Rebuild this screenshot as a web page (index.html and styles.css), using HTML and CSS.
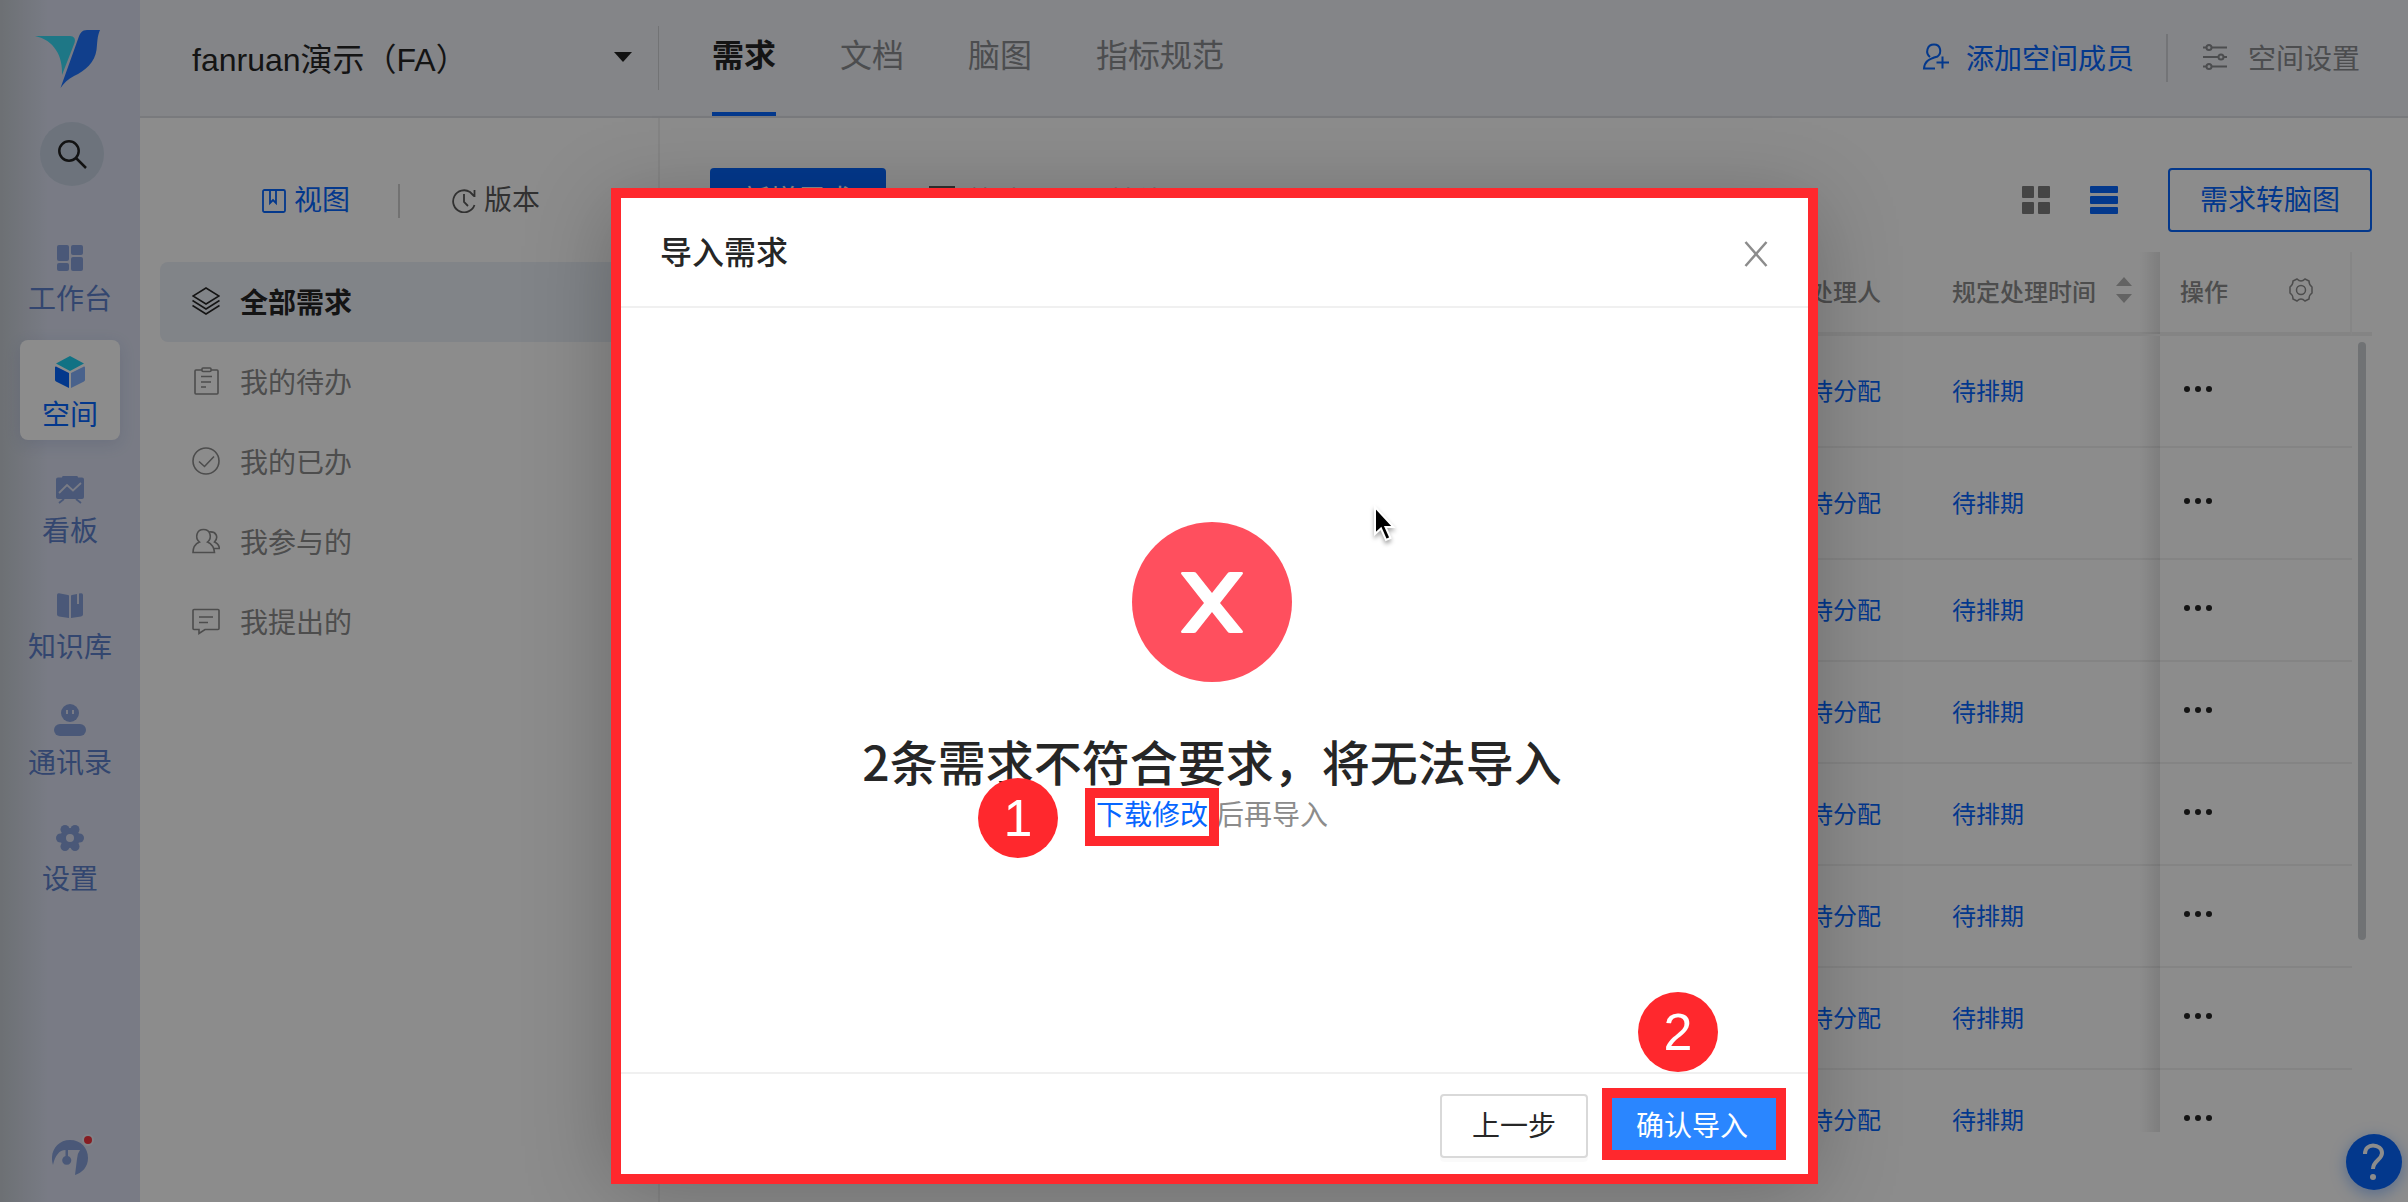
FILE: index.html
```html
<!DOCTYPE html>
<html lang="zh-CN">

<head>
    <meta charset="UTF-8">
    <meta name="viewport" content="width=device-width, initial-scale=1.0">
    <title>导入需求</title>
    <link rel="stylesheet" href="styles.css">
</head>

<body>
    <div class="app">
        <!-- 左侧导航 -->
        <nav class="sidebar">
            <a class="logo" href="#" aria-label="首页">
                <svg width="66" height="60" viewBox="0 0 66 60">
                    <path fill="#38d9f5" d="M0 6H35C39 6 41 9 39.500 13L27 45C28 26 19 10 0 6Z"/>
                    <path fill="#1f74ff" d="M52 0H65C62 7 62.500 12 61.500 20C60 32 50 41 39 46C33 49 29 53 25.500 58L43 9C45 3 47 0 52 0Z"/>
                </svg>
            </a>
            <button class="search" type="button" aria-label="搜索">
                <svg width="32" height="32" viewBox="0 0 32 32" fill="none" stroke="#222" stroke-width="2.500">
                    <circle cx="13" cy="13" r="9.700"/>
                    <path d="M20 20L30 30"/>
                </svg>
            </button>
            <a class="nav-item" href="#">
                <svg width="28" height="28" viewBox="0 0 28 28" fill="currentColor">
                    <rect x="1" y="1" width="12" height="16" rx="2"/>
                    <rect x="15" y="1" width="12" height="10" rx="2"/>
                    <rect x="1" y="19" width="12" height="8" rx="2"/>
                    <rect x="15" y="13" width="12" height="14" rx="2"/>
                </svg>
                <span>工作台</span>
            </a>
            <a class="nav-item active" href="#">
                <svg width="30" height="32" viewBox="0 0 30 32">
                    <path fill="#1fd0f0" d="M15 0L29 7.500L15 15L1 7.500Z"/>
                    <path fill="#0666ff" d="M0 11.500C0 10.500 .800 10.300 1.500 10.700L14 17V32L1 25.500C.300 25.100 0 24.500 0 24Z"/>
                    <path fill="#85b2ff" d="M30 11.500C30 10.500 29.200 10.300 28.500 10.700L16 17V32L29 25.500C29.700 25.100 30 24.500 30 24Z"/>
                </svg>
                <span>空间</span>
            </a>
            <a class="nav-item" href="#">
                <svg width="28" height="28" viewBox="0 0 28 28">
                    <path fill="currentColor" d="M6 1.500Q6 0 7 0H21Q22 0 22 1.500H26Q28 1.500 28 3.500V21Q28 23 26 23H2Q0 23 0 21V3.500Q0 1.500 2 1.500Z"/>
                    <path fill="none" stroke="currentColor" stroke-width="1.800" d="M8 23L3 27M20 23L25 27"/>
                    <path fill="none" stroke="#dce1f2" stroke-width="1.800" d="M3 17L11 9L17 14.500L25 7"/>
                </svg>
                <span>看板</span>
            </a>
            <a class="nav-item" href="#">
                <svg width="28" height="28" viewBox="0 0 28 28" fill="currentColor">
                    <path d="M1 3Q1 1 3 1.200L12 3Q13 3.200 13 4V26L3 24.500Q1 24 1 22.500Z"/>
                    <path d="M15 4Q15 3.200 16 3L21 2V12H23V1.600L25 1.200Q27 1 27 3V22.500Q27 24 25 24.500L15 26Z"/>
                </svg>
                <span>知识库</span>
            </a>
            <a class="nav-item" href="#">
                <svg width="32" height="32" viewBox="0 0 32 32">
                    <circle fill="currentColor" cx="16" cy="9" r="9"/>
                    <rect fill="currentColor" y="20" width="32" height="12" rx="6"/>
                    <path stroke="#dce1f2" stroke-width="2" d="M13 6V10M19 6V10"/>
                </svg>
                <span>通讯录</span>
            </a>
            <a class="nav-item" href="#">
                <svg width="28" height="28" viewBox="0 0 28 28">
                    <g fill="currentColor">
                        <circle cx="14" cy="14" r="10"/>
                        <circle cx="4.500" cy="14" r="4.500"/>
                        <circle cx="23.500" cy="14" r="4.500"/>
                        <circle cx="9" cy="5.500" r="4.500"/>
                        <circle cx="19" cy="5.500" r="4.500"/>
                        <circle cx="9" cy="22.500" r="4.500"/>
                        <circle cx="19" cy="22.500" r="4.500"/>
                    </g>
                    <circle fill="#dce1f2" cx="14" cy="14" r="4"/>
                </svg>
                <span>设置</span>
            </a>
            <a class="avatar" href="#" aria-label="个人中心">
                <svg width="42" height="42" viewBox="0 0 42 42">
                    <path fill="#87a0da" d="M1 31C-3 18 5 6 18 6C29 6 36 14 36 24C36 33 30 39 23 41L25 25Q25 20 28 16H16V22A4.500 4.500 0 1 1 13.500 22V16C7 16 3 22 1 31Z"/>
                    <circle fill="#fff" fill-opacity=".4" cx="36" cy="6" r="6"/>
                    <circle fill="#f5333f" cx="36" cy="6" r="4"/>
                </svg>
            </a>
        </nav>

        <div class="page">
            <!-- 顶部栏 -->
            <header class="header">
                <button class="project" type="button">
                    <span>fanruan演示（FA）</span>
                    <svg width="18" height="10" viewBox="0 0 18 10"><path fill="#222" d="M0 0H18L9 10Z"/></svg>
                </button>
                <nav class="tabs">
                    <a class="tab active" href="#">需求</a>
                    <a class="tab" href="#">文档</a>
                    <a class="tab" href="#">脑图</a>
                    <a class="tab" href="#">指标规范</a>
                </nav>
                <div class="header-actions">
                    <a class="action primary" href="#">
                        <svg width="28" height="28" viewBox="0 0 28 28" fill="none" stroke="currentColor" stroke-width="2">
                            <path d="M8 14C3 10 5 1.500 12 1.500C19 1.500 20 10 15.500 13.500C6 16 2.500 19 2 25.500H13M20.500 13.500V25.500M14.500 19.500H27"/>
                        </svg>
                        添加空间成员
                    </a>
                    <a class="action" href="#">
                        <svg width="26" height="28" viewBox="0 0 26 28" fill="none" stroke="currentColor" stroke-width="2">
                            <path d="M1 4.500H4M10 4.500H25M1 14H16M22 14H25M1 23.500H4M10 23.500H25"/>
                            <circle cx="7" cy="4.500" r="2.500"/>
                            <circle cx="19" cy="14" r="2.500"/>
                            <circle cx="7" cy="23.500" r="2.500"/>
                        </svg>
                        空间设置
                    </a>
                </div>
            </header>

            <div class="content">
                <!-- 视图列表 -->
                <aside class="views">
                    <div class="view-switch">
                        <a class="switch-item active" href="#">
                            <svg width="24" height="24" viewBox="0 0 24 24" fill="none" stroke="currentColor" stroke-width="1.800">
                                <rect x="1" y="1" width="22" height="22" rx="1.500"/>
                                <path d="M8 1V14L11 11L14 14V1"/>
                            </svg>
                            视图
                        </a>
                        <a class="switch-item" href="#">
                            <svg width="24" height="24" viewBox="0 0 24 24" fill="none" stroke="currentColor" stroke-width="1.800">
                                <path d="M22.500 16A11 11 0 1 1 18 3L22 7M22.500 1V8M12 5V13L16 17"/>
                            </svg>
                            版本
                        </a>
                    </div>
                    <ul class="menu">
                        <li><a class="menu-item active" href="#">
                            <svg width="28" height="28" viewBox="0 0 28 28" fill="none" stroke="currentColor" stroke-width="1.500">
                                <path d="M14 1L27 9L14 17L1 9ZM.500 13.500L14 22L27.500 13.500M.500 18.500L14 27L27.500 18.500"/>
                            </svg>
                            全部需求</a></li>
                        <li><a class="menu-item" href="#">
                            <svg width="28" height="28" viewBox="0 0 28 28" fill="none" stroke="currentColor" stroke-width="1.600">
                                <rect x="3" y="3" width="23" height="24" rx="1"/>
                                <rect x="10" y="1" width="9" height="3.500" rx="1" fill="#fff"/>
                                <path d="M9 9.500H20M9 15H19M9 20H14"/>
                            </svg>
                            我的待办</a></li>
                        <li><a class="menu-item" href="#">
                            <svg width="28" height="28" viewBox="0 0 28 28" fill="none" stroke="currentColor" stroke-width="1.600">
                                <circle cx="14" cy="14" r="13"/>
                                <path d="M7 14.500L12.500 19.500L22 9.500"/>
                            </svg>
                            我的已办</a></li>
                        <li><a class="menu-item" href="#">
                            <svg width="28" height="28" viewBox="0 0 28 28" fill="none" stroke="currentColor" stroke-width="1.600">
                                <path d="M7.500 15C2.500 11 4.500 2.500 11.500 2.500C18.500 2.500 20.500 11 15.500 15C20 17 22 20 22.500 25.500H1C1 20 3 17 7.500 15Z"/>
                                <path d="M17 5C24 4 27 10 22.500 15C25 16 27 18 27.500 21.500H22"/>
                            </svg>
                            我参与的</a></li>
                        <li><a class="menu-item" href="#">
                            <svg width="28" height="28" viewBox="0 0 28 28" fill="none" stroke="currentColor" stroke-width="1.600">
                                <path d="M2 2.500H26Q27 2.500 27 3.500V21.500Q27 22.500 26 22.500H13L7 26.500V22.500H2Q1 22.500 1 21.500V3.500Q1 2.500 2 2.500ZM7 10H21M7 15.500H16"/>
                            </svg>
                            我提出的</a></li>
                    </ul>
                </aside>

                <!-- 需求列表 -->
                <main class="main">
                    <div class="toolbar">
                        <button class="btn btn-solid" type="button">新增需求</button>
                        <button class="tool" type="button">
                            <svg width="28" height="28" viewBox="0 0 28 28" fill="none" stroke="currentColor" stroke-width="2">
                                <path d="M2 1H26V5L17 14V26L11 23V14L2 5Z"/>
                            </svg>
                            筛选
                        </button>
                        <button class="tool" type="button">其他</button>
                        <div class="toolbar-right">
                            <button class="icon-btn" type="button" aria-label="卡片视图">
                                <svg width="28" height="28" viewBox="0 0 28 28" fill="currentColor">
                                    <rect width="12" height="12" rx="1"/>
                                    <rect x="16" width="12" height="12" rx="1"/>
                                    <rect y="16" width="12" height="12" rx="1"/>
                                    <rect x="16" y="16" width="12" height="12" rx="1"/>
                                </svg>
                            </button>
                            <button class="icon-btn active" type="button" aria-label="列表视图">
                                <svg width="28" height="28" viewBox="0 0 28 28" fill="currentColor">
                                    <rect width="28" height="7" rx="1"/>
                                    <rect y="10" width="28" height="8" rx="1"/>
                                    <rect y="21" width="28" height="7" rx="1"/>
                                </svg>
                            </button>
                            <button class="btn btn-line" type="button">需求转脑图</button>
                        </div>
                    </div>

                    <div class="table-wrap">
                        <table class="table">
                            <thead>
                                <tr>
                                    <th></th>
                                    <th class="col-user">处理人</th>
                                    <th class="col-time">
                                        <div class="th-inner">规定处理时间
                                            <svg width="16" height="26" viewBox="0 0 16 26" fill="#b5b5b5"><path d="M8 0L16 9H0ZM8 26L16 17H0Z"/></svg>
                                        </div>
                                    </th>
                                    <th class="col-fixed">
                                        <div class="th-inner">操作
                                            <svg width="26" height="26" viewBox="0 0 26 26" fill="none" stroke="currentColor" stroke-width="1.500">
                                                <path d="M9 2Q11 4 13 4Q15 4 17 2L21 4Q21 8 24 10V16Q21 18 21 22L17 24Q15 22 13 22Q11 22 9 24L5 22Q5 18 2 16V10Q5 8 5 4Z"/>
                                                <circle cx="13" cy="13" r="4.500"/>
                                            </svg>
                                        </div>
                                    </th>
                                </tr>
                            </thead>
                            <tbody id="rows"></tbody>
                        </table>
                        <div class="gutter">
                            <div class="gutter-head"></div>
                            <div class="thumb"></div>
                        </div>
                    </div>
                </main>
            </div>
        </div>
    </div>

    <button class="help" type="button" aria-label="帮助">
        <svg width="24" height="38" viewBox="0 0 24 38">
            <path fill="none" stroke="#fff" stroke-width="4" d="M3 11C3 5 7 2.500 11 2.500C16 2.500 20 5.500 20 10C20 17 11 17 11 26"/>
            <circle fill="#fff" cx="11" cy="34" r="3"/>
        </svg>
    </button>

    <!-- 导入弹窗 -->
    <div class="mask">
        <div class="modal" role="dialog" aria-labelledby="modal-title">
            <div class="modal-head">
                <h2 class="modal-title" id="modal-title">导入需求</h2>
                <button class="close" type="button" aria-label="关闭">
                    <svg width="24" height="26" viewBox="0 0 24 26"><path fill="none" stroke="#8c8c8c" stroke-width="2.500" d="M1.500 1L22.500 25M22.500 1L1.500 25"/></svg>
                </button>
            </div>
            <div class="modal-body">
                <svg width="160" height="160" viewBox="0 0 160 160">
                    <circle fill="#ff4f5e" cx="80" cy="80" r="80"/>
                    <path fill="#fff" d="M50 50H62Q64 50 65 52L80 71L95 52Q96 50 98 50H110Q112 51 110 53L88 81L110 108Q112 110 110 111H98Q96 111 95 109L80 90L65 109Q64 111 62 111H50Q48 110 50 108L72 81L50 53Q48 51 50 50Z"/>
                </svg>
                <h3 class="result-title">2条需求不符合要求，将无法导入</h3>
                <p class="result-text">
                    <span class="step step-1">1</span>
                    <a class="download" href="#">下载修改</a>
                    <span>后再导入</span>
                </p>
            </div>
            <div class="modal-foot">
                <button class="btn btn-default" type="button">上一步</button>
                <div class="confirm">
                    <button class="btn btn-confirm" type="button">确认导入</button>
                    <span class="step step-2">2</span>
                </div>
            </div>
        </div>
    </div>

    <!-- 鼠标指针 -->
    <svg class="cursor" width="24" height="38" viewBox="0 0 24 38">
        <path fill="#000" stroke="#fff" stroke-width="2" d="M2 2V29L8 23.500L13 35L17.500 33L12.500 22H20.500Z"/>
    </svg>

    <script>
        const rows = document.getElementById('rows');

        for (let i = 0; i < 8; i++) {
            const tr = document.createElement('tr');
            if (i < 2) {
                tr.className = 'tall';
            }
            tr.innerHTML = `
                <td></td>
                <td><a href="#">待分配</a></td>
                <td><a href="#">待排期</a></td>
                <td class="col-fixed">
                    <button class="more" type="button" aria-label="更多操作"><i></i><i></i><i></i></button>
                </td>`;
            rows.appendChild(tr);
        }
    </script>
</body>

</html>
```

FILE: styles.css
```css
* {
    box-sizing: border-box;
}

body {
    margin: 0;
    height: 100vh;
    overflow: hidden;
    position: relative;
    font-family: "Liberation Sans", "Noto Sans CJK SC", sans-serif;
    font-size: 28px;
    color: #262626;
    background: #fff;
}

a {
    color: inherit;
    text-decoration: none;
}

button {
    padding: 0;
    border: none;
    background: none;
    font: inherit;
    color: inherit;
    cursor: pointer;
}

svg {
    display: block;
    flex: none;
}

.app {
    display: flex;
    height: 100%;
}

/* 左侧导航 */
.sidebar {
    flex: none;
    width: 140px;
    padding: 30px 20px 28px;
    display: flex;
    flex-direction: column;
    align-items: center;
    gap: 16px;
    background: linear-gradient(to right, #c6ccd3, #dce1f2 48px);
}

.logo {
    margin: 0 4px 16px 0;
}

.search {
    flex: none;
    width: 64px;
    height: 64px;
    margin-left: 4px;
    margin-bottom: 22px;
    display: flex;
    align-items: center;
    justify-content: center;
    border-radius: 50%;
    background: #c6d2e2;
}

.nav-item {
    flex: none;
    width: 100px;
    height: 100px;
    padding-bottom: 4px;
    display: flex;
    flex-direction: column;
    align-items: center;
    justify-content: flex-end;
    gap: 8px;
    border-radius: 8px;
    color: #87a0da;
}

.nav-item span {
    line-height: 40px;
    color: #5d80ca;
}

.nav-item.active {
    background: #fff;
    box-shadow: 0 4px 16px rgba(60, 90, 160, 0.15);
}

.nav-item.active span {
    color: #0666ff;
}

.avatar {
    margin-top: auto;
    margin-left: 6px;
    flex: none;
    height: 40px;
}

.page {
    flex: 1;
    min-width: 0;
    display: flex;
    flex-direction: column;
}

/* 顶部栏 */
.header {
    flex: none;
    height: 118px;
    display: flex;
    background: #f0f2f7;
    border-bottom: 2px solid #dddfe4;
}

.project {
    width: 519px;
    height: 64px;
    margin-top: 26px;
    padding: 0 26px 2px 52px;
    display: flex;
    align-items: center;
    justify-content: space-between;
    border-right: 1px solid #cfd1d6;
    font-size: 32px;
}

.tabs {
    display: flex;
    gap: 64px;
    margin-left: 53px;
    font-size: 32px;
    line-height: 112px;
}

.tab {
    color: #8a8c90;
}

.tab.active {
    color: #262626;
    font-weight: 700;
    border-bottom: 4px solid #0666ff;
}

.header-actions {
    margin-left: auto;
    padding: 34px 48px 34px 0;
    display: flex;
}

.action {
    display: flex;
    align-items: center;
    gap: 20px;
    padding-bottom: 2px;
    color: #8a8c90;
}

.action.primary {
    padding-right: 32px;
    margin-right: 34px;
    gap: 16px;
    color: #0666ff;
    border-right: 2px solid #d2d4d9;
}

.content {
    flex: 1;
    min-height: 0;
    display: flex;
}

/* 视图列表 */
.views {
    flex: none;
    width: 520px;
    padding: 66px 20px 0;
    border-right: 2px solid #f0f0f0;
}

.view-switch {
    display: flex;
    justify-content: center;
    line-height: 34px;
    margin-bottom: 44px;
}

.switch-item {
    display: flex;
    align-items: center;
    gap: 8px;
    padding: 0 48px 0 52px;
    color: #595959;
}

.switch-item.active {
    color: #0666ff;
    border-right: 2px solid #d0d0d0;
}

.menu {
    margin: 0;
    padding: 0;
    list-style: none;
}

.menu-item {
    display: flex;
    align-items: center;
    gap: 20px;
    height: 80px;
    padding: 0 0 2px 32px;
    border-radius: 8px;
    color: #8c8c8c;
}

.menu-item.active {
    background: #ecf0f7;
    color: #262626;
    font-weight: 700;
}

/* 需求列表 */
.main {
    flex: 1;
    min-width: 0;
    display: flex;
    flex-direction: column;
    padding: 50px 36px 70px 50px;
}

.toolbar {
    display: flex;
    align-items: center;
    margin-bottom: 20px;
}

.btn {
    height: 64px;
    padding: 2px 32px 0;
    border-radius: 4px;
    line-height: 58px;
}

.btn-solid {
    background: #0666ff;
    color: #fff;
}

.btn-line {
    padding: 2px 30px 0;
    border: 2px solid #0666ff;
    color: #0666ff;
}

.tool {
    display: flex;
    align-items: center;
    gap: 12px;
    margin: 0 42px;
    color: #595959;
}

.toolbar-right {
    margin-left: auto;
    display: flex;
    align-items: center;
    gap: 40px;
    color: #7f7f7f;
}

.toolbar-right .btn-line {
    margin-left: 10px;
}

.icon-btn.active {
    color: #0666ff;
}

.table-wrap {
    flex: 1;
    min-height: 0;
    display: flex;
    align-items: flex-start;
    overflow: hidden;
}

.table {
    flex: 1;
    table-layout: fixed;
    border-collapse: separate;
    border-spacing: 0;
    font-size: 24px;
}

.table th {
    height: 84px;
    padding: 0 16px 4px;
    border-bottom: 4px solid #f0f0f0;
    text-align: left;
    font-weight: 500;
    color: #8c8c8c;
}

.table td {
    height: 102px;
    padding: 0 16px 4px;
    border-bottom: 2px solid #f0f0f0;
    color: #0666ff;
}

.table .tall td {
    height: 112px;
}

.col-user {
    width: 143px;
}

.col-time {
    width: 224px;
}

.table .col-fixed {
    width: 192px;
    padding: 0 36px 4px 20px;
    position: relative;
}

/* 固定列左侧阴影 */
.col-fixed::before {
    content: "";
    position: absolute;
    top: 0;
    bottom: -2px;
    left: -20px;
    width: 20px;
    background: linear-gradient(to right, transparent, rgba(0, 0, 0, 0.1));
}

.table th.col-fixed {
    border-right: 2px solid #f4f4f4;
}

.th-inner {
    display: flex;
    align-items: center;
    justify-content: space-between;
    white-space: nowrap;
}

.col-time .th-inner {
    padding-right: 12px;
}

.more {
    display: flex;
    gap: 5px;
    padding: 4px;
}

.more i {
    width: 6px;
    height: 6px;
    border-radius: 50%;
    background: #262626;
}

.gutter {
    flex: none;
    width: 20px;
}

.gutter-head {
    height: 84px;
    margin-bottom: 6px;
    border-bottom: 4px solid #f0f0f0;
}

.thumb {
    width: 8px;
    height: 598px;
    margin-left: 6px;
    border-radius: 4px;
    background: #cdd0d4;
}

.help {
    position: absolute;
    right: 6px;
    bottom: 12px;
    width: 56px;
    height: 56px;
    display: flex;
    align-items: center;
    justify-content: center;
    border-radius: 50%;
    background: #0666ff;
    box-shadow: 0 4px 16px rgba(6, 102, 255, 0.4);
}

/* 导入弹窗 */
.mask {
    position: absolute;
    inset: 0;
    padding: 198px 0 0 16px;
    background: rgba(0, 0, 0, 0.45);
}

.modal {
    position: relative;
    width: 1200px;
    margin: 0 auto;
    background: #fff;
    box-shadow: 0 8px 80px rgba(0, 0, 0, 0.25);
}

/* 红色标注框 */
.modal::after {
    content: "";
    position: absolute;
    inset: -10px -6px -6px -1px;
    border: 10px solid #ff282d;
    pointer-events: none;
}

.modal-head {
    display: flex;
    align-items: center;
    justify-content: space-between;
    height: 110px;
    padding: 0 44px 0 48px;
    border-bottom: 2px solid #f0f0f0;
}

.modal-title {
    margin: 0;
    padding-bottom: 4px;
    font-size: 32px;
    font-weight: 500;
}

.close {
    padding-top: 4px;
}

.modal-body {
    display: flex;
    flex-direction: column;
    align-items: center;
    padding: 214px 0 232px;
}

.result-title {
    margin: 50px 0 4px;
    font-family: "Noto Sans CJK SC", sans-serif;
    font-size: 48px;
    font-weight: 500;
    line-height: 56px;
}

.result-text {
    position: relative;
    display: flex;
    gap: 8px;
    margin: 0;
    line-height: 48px;
    color: #8c8c8c;
}

.download {
    position: relative;
    color: #0666ff;
}

.download::after {
    content: "";
    position: absolute;
    inset: -4px -11px -6px;
    border: 10px solid #ff282d;
}

.step {
    position: absolute;
    z-index: 1;
    width: 80px;
    height: 80px;
    border-radius: 50%;
    background: #ff282d;
    color: #fff;
    font-size: 52px;
    line-height: 80px;
    text-align: center;
}

.step-1 {
    left: -118px;
    top: -14px;
}

.modal-foot {
    display: flex;
    justify-content: flex-end;
    gap: 16px;
    padding: 20px 32px;
    border-top: 2px solid #f0f0f0;
}

.btn-default {
    padding: 2px 30px 0;
    border: 2px solid #d9d9d9;
    box-shadow: 0 4px 0 rgba(0, 0, 0, 0.02);
}

.confirm {
    position: relative;
}

.btn-confirm {
    background: #2a86ff;
    color: #fff;
}

.confirm::after {
    content: "";
    position: absolute;
    inset: -6px -6px -2px -2px;
    border: 10px solid #ff282d;
}

.step-2 {
    left: 34px;
    top: -102px;
}

.cursor {
    position: absolute;
    left: 1373px;
    top: 505px;
    filter: drop-shadow(0 3px 2px rgba(0, 0, 0, 0.35));
}
```
